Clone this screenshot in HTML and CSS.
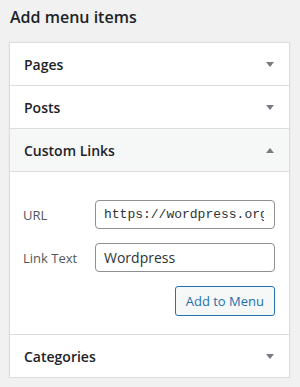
FILE: index.html
```html
<!DOCTYPE html>
<html>

<head>
    <meta name="viewport" content="width=device-width, initial-scale=1" />
    <link rel="stylesheet" href="styles.css">
</head>

<body>
    <h2 class="title">Add menu items</h2>
    <div class="panel">
        <div class="row">
            <span>Pages</span><span class="arrow down"></span>
        </div>
        <div class="row">
            <span>Posts</span><span class="arrow down"></span>
        </div>
        <div class="row open">
            <span>Custom Links</span><span class="arrow up"></span>
        </div>
        <div class="body">
            <label class="lbl" for="url">URL</label>
            <input id="url" class="field mono" type="text" value="https://wordpress.org">
            <label class="lbl" for="linktext">Link Text</label>
            <input id="linktext" class="field" type="text" value="Wordpress">
            <div class="actions">
                <button class="btn">Add to Menu</button>
            </div>
        </div>
        <div class="row last">
            <span>Categories</span><span class="arrow down"></span>
        </div>
    </div>
</body>

</html>
```

FILE: styles.css
```css
body {
    margin: 0;
    padding: 0 10px 0 9px;
    background-color: #f1f1f1;
    font-family: "Open Sans", "Noto Sans", sans-serif;
    color: #1d2327;
}

.title {
    margin: 0;
    padding: 5px 0 0 1px;
    height: 37px;
    font-size: 16px;
    font-weight: 600;
    line-height: 24px;
}

.panel {
    background-color: #fff;
    border: 1px solid #dcdcde;
    box-shadow: 0 1px 1px rgba(0, 0, 0, 0.1);
}

.row {
    display: flex;
    align-items: center;
    justify-content: space-between;
    height: 42px;
    padding: 0 15px 0 14px;
    border-bottom: 1px solid #dcdcde;
    font-size: 14px;
    font-weight: 600;
}

.row.open {
    background-color: #f6f7f7;
}

.row.last {
    border-bottom: none;
}

.arrow {
    width: 0;
    height: 0;
    border-left: 4px solid transparent;
    border-right: 4px solid transparent;
}

.arrow.down {
    border-top: 5px solid #787c82;
}

.arrow.up {
    border-bottom: 5px solid #787c82;
}

.body {
    display: grid;
    grid-template-columns: 72px 1fr;
    align-items: center;
    row-gap: 14px;
    padding: 28px 14px 18px 13px;
    border-bottom: 1px solid #dcdcde;
}

.lbl {
    font-size: 13px;
    color: #50575e;
}

.field {
    box-sizing: border-box;
    width: 180px;
    height: 29px;
    margin: 0;
    padding: 0 10px 0 8px;
    border: 1px solid #8c8f94;
    border-radius: 4px;
    font-family: "Open Sans", "Noto Sans", sans-serif;
    font-size: 14px;
    color: #2c3338;
}

.mono {
    font-family: "Liberation Mono", "DejaVu Sans Mono", monospace;
    font-size: 13px;
}

.actions {
    grid-column: 1 / span 2;
    display: flex;
    justify-content: flex-end;
}

.btn {
    height: 30px;
    padding: 0 10px;
    background-color: #f6f7f7;
    border: 1px solid #2271b1;
    border-radius: 3px;
    color: #2271b1;
    font-family: "Open Sans", "Noto Sans", sans-serif;
    font-size: 13px;
}
```
